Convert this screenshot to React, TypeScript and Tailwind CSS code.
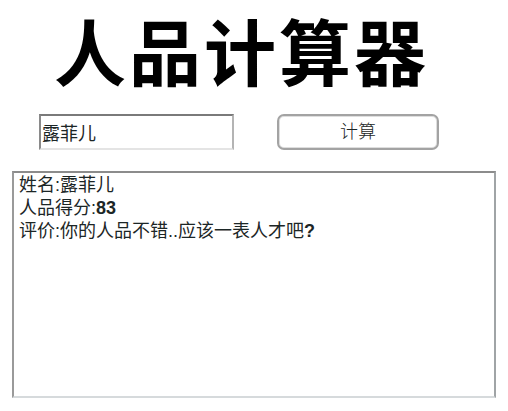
import React from 'react';

const cjk = "font-['Liberation_Sans','Noto_Sans_CJK_SC',sans-serif]";

const App: React.FC = () => {
  return (
    <div className={`min-h-[411px] w-[508px] bg-white text-[#1c2626] ${cjk}`}>
      <h1 className="pl-[54px] pt-[19px] text-[72px] font-bold leading-none tracking-[3px] text-black">人品计算器</h1>

      <div className="mt-[23px] flex flex-row items-center pl-[39px]">
        <input
          defaultValue="露菲儿"
          className="h-[36px] w-[195px] border-2 border-b-[#e4e4e4] border-l-[#8a8a8a] border-r-[#b4b4b4] border-t-[#7a7a7a] bg-white px-[1px] text-[18px] text-[#1c2626] outline-none"
        />
        <button className="ml-[43px] h-[36px] w-[162px] rounded-[7px] border-2 border-[#a3a3a3] bg-white text-[18px] font-light text-[#1c2626] shadow-[inset_0_0_0_1px_#dedede]">
          计算
        </button>
      </div>

      <div className="ml-[12px] mt-[21px] h-[227px] w-[484px] border-2 border-b-[#d6dadc] border-l-[#9a9a9a] border-r-[#a0a4a6] border-t-[#8c8c8c] bg-white px-[5px] pt-[1px] text-[18px] leading-[23px]">
        <div>姓名:露菲儿</div>
        <div>
          人品得分:<span className="font-semibold">83</span>
        </div>
        <div>
          评价:你的人品不错..应该一表人才吧<span className="font-semibold">?</span>
        </div>
      </div>
    </div>
  );
};

export default App;
